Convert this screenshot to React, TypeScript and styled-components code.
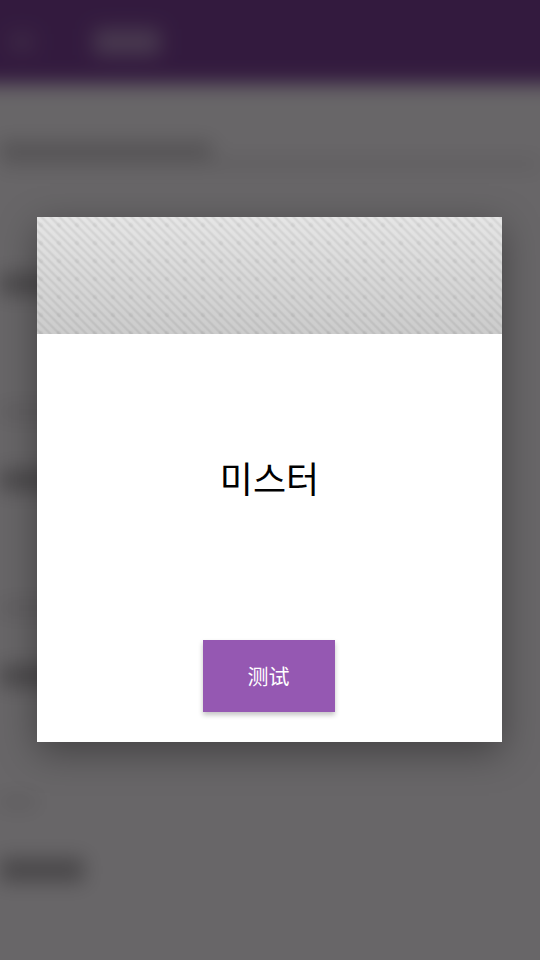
import React from "react";
import styled, { createGlobalStyle } from "styled-components";

const GlobalStyle = createGlobalStyle`
  html, body {
    margin: 0;
    padding: 0;
    background: #fff;
  }
`;

const Screen = styled.div`
  position: relative;
  width: 540px;
  height: 960px;
  overflow: hidden;
`;

/* the page behind the dialog, only seen blurred */
const BlurredPage = styled.div`
  margin: -30px;
  height: 1020px;
  display: flex;
  flex-direction: column;
  background: #fff;
  filter: blur(10px);
`;

const AppBar = styled.div`
  height: 84px;
  padding: 30px 30px 0;
  flex-shrink: 0;
  display: flex;
  align-items: center;
  gap: 60px;
  background: #7b4397;
`;

const MenuIcon = styled.div`
  width: 24px;
  height: 18px;
  margin-left: 10px;
  background: rgba(255, 255, 255, 0.2);
`;

const AppTitle = styled.div`
  width: 66px;
  height: 26px;
  background: rgba(255, 255, 255, 0.42);
`;

const Content = styled.div`
  padding: 58px 30px 0 30px;
  display: flex;
  flex-direction: column;
`;

const Bar = styled.div<{ $w: number; $h: number; $after: number; $alpha: number }>`
  width: ${(p) => p.$w}px;
  height: ${(p) => p.$h}px;
  margin-bottom: ${(p) => p.$after}px;
  background: rgba(0, 0, 0, ${(p) => p.$alpha});
`;

const Overlay = styled.div`
  position: absolute;
  inset: 0;
  display: flex;
  align-items: center;
  justify-content: center;
  background: rgba(3, 0, 3, 0.6);
`;

const Dialog = styled.div`
  width: 465px;
  height: 525px;
  margin: -1px 0 0 -1px;
  display: flex;
  flex-direction: column;
  background: #fff;
  box-shadow: 0 10px 36px rgba(0, 0, 0, 0.36);
`;

const Hatch = styled.div`
  height: 117px;
  flex-shrink: 0;
  background-image:
    radial-gradient(circle at 4px 8px, rgba(0, 0, 0, 0.035) 0, rgba(0, 0, 0, 0.035) 1.5px, transparent 3px),
    linear-gradient(
      45deg,
      rgba(0, 0, 0, 0) 8%,
      rgba(0, 0, 0, 0.075) 25%,
      rgba(0, 0, 0, 0) 42%,
      rgba(0, 0, 0, 0) 58%,
      rgba(0, 0, 0, 0.075) 75%,
      rgba(0, 0, 0, 0) 92%
    ),
    linear-gradient(#e6e6e6, #cccccc);
  background-size: 18px 18px, 9px 9px, auto;
`;

const Body = styled.div`
  flex: 1;
  display: flex;
  flex-direction: column;
  align-items: center;
  padding: 0 2px 30px 0;
`;

const Name = styled.div`
  flex: 1;
  display: flex;
  align-items: center;
  margin-right: -2px;
  padding-bottom: 20px;
  font-family: "Noto Sans CJK KR", "Noto Sans", sans-serif;
  font-size: 36px;
  color: #000;
`;

const TestButton = styled.button`
  width: 132px;
  height: 72px;
  padding: 0 0 2px;
  border: 0;
  background: #9558b2;
  color: #fff;
  font-family: "Noto Sans CJK SC", "Noto Sans", sans-serif;
  font-size: 21px;
  box-shadow: 0 3px 5px rgba(0, 0, 0, 0.24);
`;

export default function App() {
  return (
    <Screen>
      <GlobalStyle />
      <BlurredPage>
        <AppBar>
          <MenuIcon />
          <AppTitle />
        </AppBar>
        <Content>
          <Bar $w={212} $h={16} $after={0} $alpha={0.2} />
          <Bar $w={540} $h={12} $after={104} $alpha={0.08} />
          <Bar $w={120} $h={20} $after={112} $alpha={0.3} />
          <Bar $w={100} $h={12} $after={52} $alpha={0.1} />
          <Bar $w={120} $h={20} $after={112} $alpha={0.3} />
          <Bar $w={100} $h={12} $after={52} $alpha={0.1} />
          <Bar $w={120} $h={20} $after={110} $alpha={0.3} />
          <Bar $w={36} $h={12} $after={50} $alpha={0.1} />
          <Bar $w={84} $h={24} $after={0} $alpha={0.3} />
        </Content>
      </BlurredPage>
      <Overlay>
        <Dialog>
          <Hatch />
          <Body>
            <Name>미스터</Name>
            <TestButton>测试</TestButton>
          </Body>
        </Dialog>
      </Overlay>
    </Screen>
  );
}
